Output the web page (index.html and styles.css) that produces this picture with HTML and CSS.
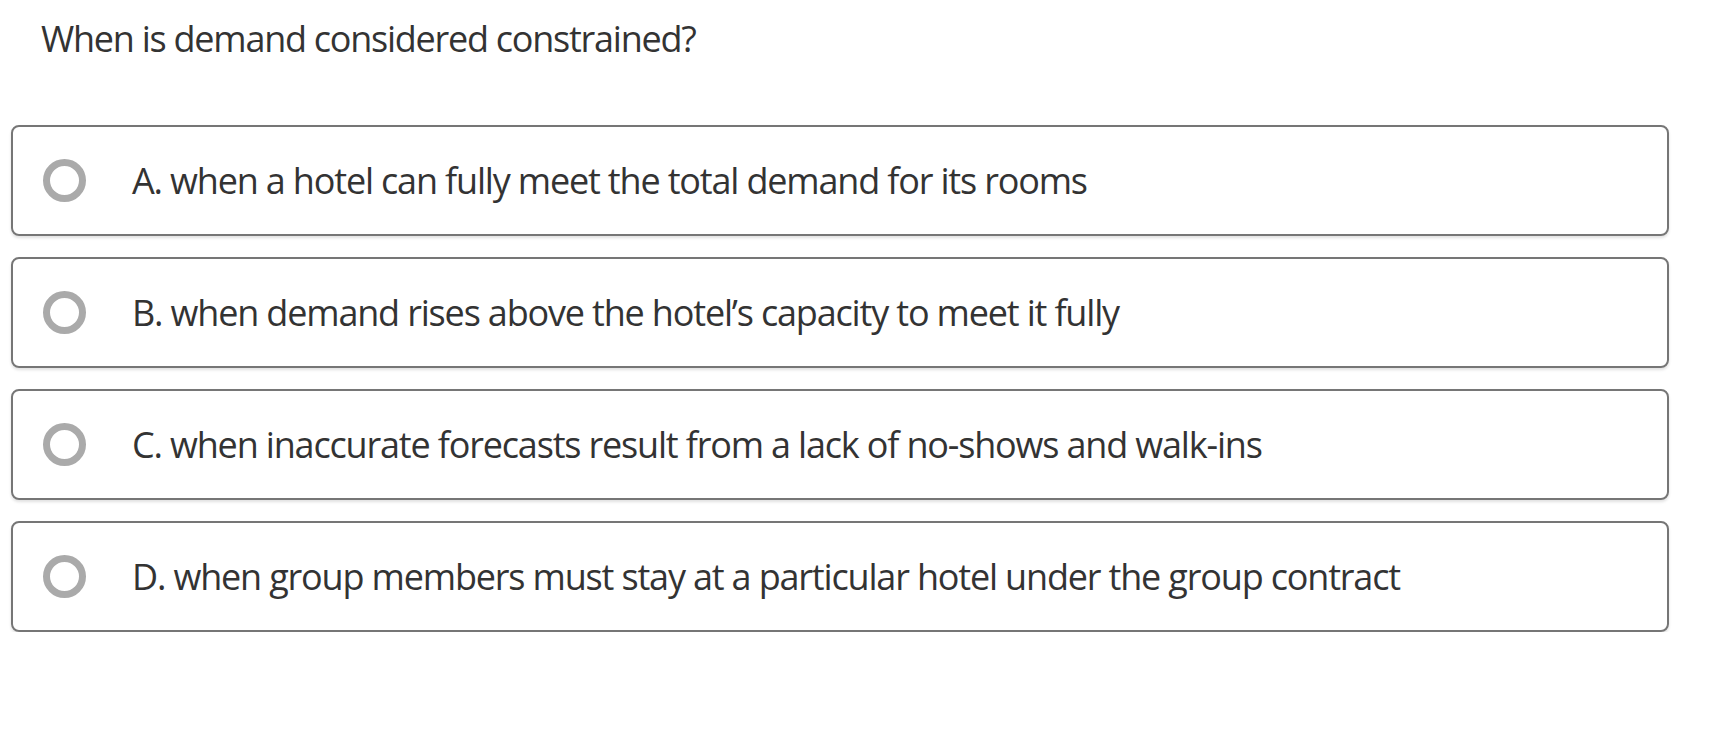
FILE: index.html
```html
<!DOCTYPE html>
<html lang="en">
<head>
<meta charset="utf-8">
<title>Question</title>
<link rel="stylesheet" href="styles.css">
</head>
<body>
<div class="page">
  <h1 class="question">When is demand considered constrained?</h1>
  <div class="options">
    <label class="option"><span class="radio"></span><span class="label">A. when a hotel can fully meet the total demand for its rooms</span></label>
    <label class="option"><span class="radio"></span><span class="label">B. when demand rises above the hotel’s capacity to meet it fully</span></label>
    <label class="option"><span class="radio"></span><span class="label">C. when inaccurate forecasts result from a lack of no-shows and walk-ins</span></label>
    <label class="option"><span class="radio"></span><span class="label">D. when group members must stay at a particular hotel under the group contract</span></label>
  </div>
</div>
</body>
</html>
```
FILE: styles.css
```css
html, body {
  margin: 0;
  padding: 0;
  background: #ffffff;
}
body {
  font-family: "Open Sans", "Noto Sans", sans-serif;
  color: #333333;
}
.page {
  width: 1658px;
  padding: 14px 0 0 11px;
}
.question {
  margin: 0 0 62px 0;
  padding-left: 30px;
  font-size: 36px;
  font-weight: 400;
  line-height: 49px;
  letter-spacing: -1.25px;
}
.options {
  display: flex;
  flex-direction: column;
  gap: 21px;
}
.option {
  box-sizing: border-box;
  height: 111px;
  display: flex;
  align-items: center;
  border: 2px solid #767676;
  border-radius: 8px;
  box-shadow: 0 2px 3px rgba(0, 0, 0, 0.12);
  padding-left: 30px;
}
.radio {
  box-sizing: border-box;
  flex: none;
  width: 43px;
  height: 43px;
  border: 7px solid #aaaaaa;
  border-radius: 50%;
  margin-right: 46px;
}
.label {
  font-size: 36px;
  line-height: 49px;
  letter-spacing: -1.17px;
}
```
